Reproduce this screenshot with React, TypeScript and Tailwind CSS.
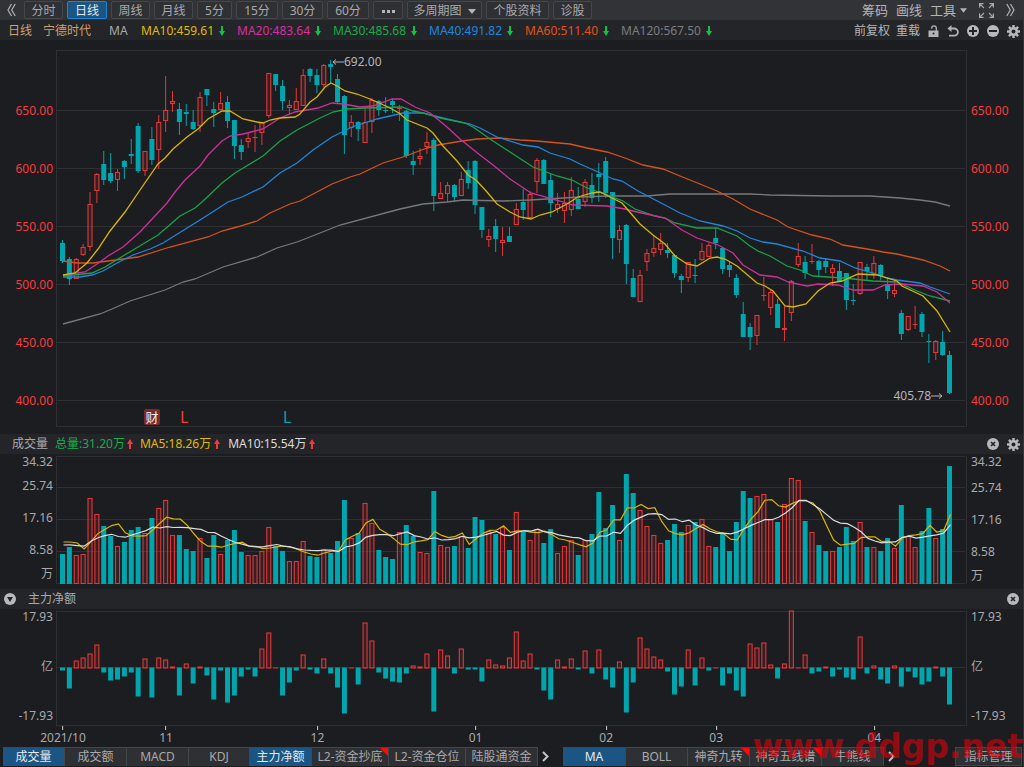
import { useState } from "react";
import type { ReactNode } from "react";
import clsx from "clsx";

// ── Data ──────────────────────────────────────────────────────────

// direction, high, body top, body bottom, low (chart units)
type Candle = ["u" | "d", number, number, number, number];

const CANDLES: Candle[] = [
  ["d", 240, 243, 261, 263], ["d", 257, 259, 279, 285], ["u", 258, 259, 279, 279], ["u", 244, 247, 255, 256],
  ["u", 192, 204, 247, 251], ["u", 173, 174, 191, 203], ["d", 151, 164, 180, 185], ["d", 153, 173, 181, 183],
  ["u", 169, 172, 180, 191], ["d", 160, 161, 167, 179], ["d", 139, 154, 156, 164], ["d", 123, 126, 171, 173],
  ["u", 151, 151, 171, 176], ["d", 127, 139, 160, 165], ["u", 115, 122, 150, 169], ["u", 76, 110, 121, 132],
  ["u", 91, 101, 104, 112], ["d", 103, 109, 122, 135], ["d", 104, 112, 114, 126], ["d", 110, 122, 129, 130],
  ["u", 92, 97, 126, 132], ["d", 89, 89, 95, 106], ["d", 102, 109, 113, 127], ["u", 92, 103, 110, 110],
  ["d", 96, 102, 121, 128], ["d", 120, 120, 146, 159], ["d", 139, 145, 152, 160], ["u", 133, 138, 142, 148],
  ["u", 125, 137, 138, 152], ["u", 122, 122, 133, 145], ["u", 73, 73, 116, 118], ["d", 74, 74, 85, 91],
  ["d", 80, 86, 101, 110], ["u", 100, 105, 108, 115], ["u", 88, 101, 110, 110], ["u", 69, 75, 106, 106],
  ["d", 68, 69, 76, 82], ["d", 69, 75, 85, 93], ["u", 64, 65, 85, 87], ["d", 60, 64, 67, 84],
  ["d", 74, 79, 102, 103], ["d", 95, 96, 135, 154], ["u", 115, 122, 128, 137], ["d", 121, 122, 129, 141],
  ["u", 106, 122, 143, 143], ["u", 98, 100, 122, 133], ["d", 100, 101, 110, 116], ["d", 97, 110, 111, 113],
  ["d", 99, 101, 105, 113], ["u", 105, 108, 109, 121], ["d", 110, 111, 156, 158], ["d", 151, 161, 165, 175],
  ["u", 148, 156, 159, 165], ["u", 132, 142, 147, 154], ["d", 138, 140, 196, 211], ["u", 182, 193, 199, 199],
  ["u", 182, 185, 194, 202], ["d", 184, 185, 197, 202], ["u", 172, 179, 196, 196], ["d", 161, 170, 183, 189],
  ["d", 160, 161, 205, 214], ["d", 207, 207, 230, 238], ["u", 229, 236, 240, 247], ["d", 219, 226, 239, 252],
  ["u", 227, 240, 243, 256], ["d", 227, 236, 242, 242], ["u", 203, 209, 225, 225], ["d", 189, 202, 210, 220],
  ["u", 191, 194, 218, 218], ["u", 158, 160, 182, 193], ["d", 159, 160, 184, 184], ["d", 174, 180, 203, 217],
  ["u", 193, 204, 209, 213], ["u", 192, 203, 211, 223], ["u", 177, 190, 210, 216], ["d", 187, 199, 209, 209],
  ["u", 179, 182, 202, 207], ["d", 173, 185, 198, 203], ["d", 163, 174, 177, 202], ["d", 157, 161, 193, 198],
  ["d", 192, 192, 238, 259], ["u", 225, 230, 240, 253], ["d", 224, 225, 264, 284], ["d", 269, 278, 297, 297],
  ["u", 270, 275, 302, 302], ["u", 249, 253, 262, 271], ["u", 236, 248, 253, 257], ["u", 233, 243, 250, 255],
  ["d", 243, 250, 253, 258], ["d", 254, 255, 273, 278], ["d", 274, 276, 280, 293], ["u", 262, 262, 278, 282],
  ["d", 259, 275, 276, 283], ["u", 243, 251, 260, 261], ["u", 242, 245, 257, 257], ["d", 228, 238, 243, 249],
  ["d", 248, 248, 269, 274], ["d", 262, 265, 270, 277], ["d", 274, 278, 295, 298], ["d", 302, 314, 337, 337],
  ["d", 323, 327, 337, 350], ["u", 315, 315, 336, 345], ["u", 277, 295, 296, 301], ["u", 289, 292, 308, 315],
  ["d", 299, 304, 328, 328], ["u", 306, 328, 330, 341], ["u", 280, 281, 313, 321], ["u", 243, 256, 265, 267],
  ["d", 256, 262, 273, 279], ["u", 244, 261, 262, 264], ["d", 260, 261, 270, 276], ["d", 258, 261, 267, 273],
  ["u", 264, 268, 273, 286], ["d", 263, 271, 282, 282], ["d", 273, 273, 300, 310], ["d", 284, 300, 301, 305],
  ["u", 262, 262, 294, 295], ["d", 264, 267, 271, 281], ["u", 256, 263, 274, 279], ["d", 264, 265, 276, 280],
  ["d", 277, 284, 291, 299], ["u", 279, 290, 294, 297], ["d", 310, 313, 334, 340], ["u", 316, 316, 330, 331],
  ["u", 306, 324, 325, 329], ["d", 312, 314, 332, 337], ["d", 334, 341, 342, 363], ["u", 340, 341, 353, 360],
  ["d", 331, 342, 355, 356], ["d", 351, 355, 393, 394],
];

const VOLUMES = [
  30, 37, 29, 30, 86, 70, 58, 48, 38, 42, 54, 57, 51, 66, 76, 84, 49, 49, 35, 33,
  46, 26, 49, 30, 44, 54, 32, 29, 29, 33, 57, 38, 33, 23, 23, 43, 28, 27, 35, 31,
  43, 84, 46, 51, 81, 61, 34, 27, 25, 52, 59, 48, 32, 31, 93, 39, 37, 38, 48, 36,
  67, 64, 53, 50, 57, 34, 72, 52, 44, 55, 41, 55, 31, 38, 44, 29, 44, 50, 92, 56,
  79, 44, 110, 91, 74, 58, 49, 41, 44, 60, 52, 59, 62, 65, 38, 37, 51, 33, 62, 93,
  86, 88, 90, 65, 62, 80, 106, 104, 63, 52, 39, 33, 33, 37, 57, 43, 62, 37, 37, 33,
  46, 36, 79, 48, 37, 53, 76, 46, 55, 118,
];

// trading days before the visible window, needed by the averages
const VOLUME_HISTORY = [36, 36, 36, 36, 36, 37, 34, 60, 49];

const FLOWS = [
  -3, -21, 8, 11, 15, 24, -5, -13, -12, -9, -5, -29, 10, -30, 11, 9, 2, -28, 5, -16,
  2, -8, -32, -3, -35, -28, -9, -2, -9, 20, 36, 1, -28, -15, -3, 14, -2, -6, 10, -6,
  -20, -46, 1, -17, 46, 28, -5, -11, -14, -15, -6, 3, 2, 15, -44, 19, 13, -6, 20, -2,
  -2, -14, 9, 4, 3, 11, 37, 8, 15, -2, -23, -32, 9, 2, 10, -2, 18, -6, 19, -12,
  -20, 7, -45, -15, 31, 20, 12, 9, -4, -27, -19, 19, -18, 11, -3, 1, -18, -6, -23, -29,
  25, 21, 26, 4, -11, 5, 58, 1, 14, -6, -4, 2, -9, -2, -10, -12, 32, -6, 3, -12,
  -16, 3, -19, -4, -10, -17, -14, 2, -9, -37,
];

const MA_LINES = [
  {
    name: "MA120",
    color: "#77787b",
    points:
      "63,324 100,314 112,309 130,301 165,290 183,282 195,279 223,267 257,257 277,248 297,242 320,233 340,225 400,209 423,204 447,202 463,200 503,201 530,200 580,197 607,196 647,196 670,194 750,194 770,195 830,196 870,196 900,198 920,200 935,202 950,206",
  },
  {
    name: "MA60",
    color: "#d5521d",
    points:
      "63,261 77,263 93,263 138,257 170,247 208,237 222,231 237,227 257,221 270,213 290,204 300,201 332,184 350,177 360,174 383,163 403,157 427,148 438,145 462,141 477,139 500,138 520,140 537,141 570,144 587,148 607,152 625,158 643,165 663,169 680,176 700,184 717,191 733,199 750,209 777,220 788,227 812,235 830,239 843,245 873,250 883,252 897,254 923,260 940,266 950,271",
  },
  {
    name: "MA40",
    color: "#1f86dc",
    points:
      "63,277 80,277 92,275 103,271 117,263 133,255 150,249 163,243 200,220 228,202 242,197 263,187 280,173 297,163 313,150 332,137 352,127 377,119 403,113 423,113 447,119 470,124 480,128 497,137 523,145 538,147 550,153 570,159 580,164 598,172 613,179 622,181 638,191 663,204 680,213 700,221 723,226 737,231 750,238 763,242 777,244 803,251 820,258 840,261 855,268 873,273 887,278 897,280 920,283 930,287 950,294",
  },
  {
    name: "MA30",
    color: "#17a34a",
    points:
      "63,276 92,273 105,267 118,259 133,250 158,235 180,216 195,208 202,202 222,183 235,173 263,156 280,141 297,130 320,118 333,112 347,109 367,108 402,107 413,111 423,113 440,118 465,123 473,127 493,141 510,152 533,167 557,176 572,180 587,188 605,194 623,201 635,209 655,216 665,218 675,223 697,228 717,228 737,236 750,246 758,251 770,256 787,266 800,270 813,276 843,278 873,281 897,282 917,291 930,296 950,301",
  },
  {
    name: "MA20",
    color: "#cf2f9a",
    points:
      "63,275 85,272 97,264 108,256 123,247 140,232 153,218 167,203 175,192 185,180 200,166 208,155 222,141 230,136 243,134 263,129 280,118 295,112 318,108 332,103 343,104 360,107 373,106 392,99 401,99 415,107 430,113 447,127 460,139 480,155 493,165 510,179 531,193 560,201 573,205 607,206 613,207 625,209 637,212 665,218 682,230 697,238 718,245 733,253 743,265 760,275 777,277 788,282 807,286 818,284 838,285 853,290 873,290 885,285 902,284 923,286 937,292 950,303",
  },
  {
    name: "MA10",
    color: "#d9b408",
    points:
      "63,275 75,273 87,263 98,249 110,231 125,212 140,190 158,164 165,158 173,149 187,137 198,129 208,119 222,111 230,111 243,119 257,122 263,123 270,120 280,118 295,117 300,114 310,102 317,97 325,87 331,83 337,86 345,91 357,94 370,99 377,102 388,107 399,113 407,120 427,128 433,133 443,146 457,161 468,175 476,180 487,192 497,204 510,212 520,217 531,219 540,215 552,212 567,204 578,197 592,193 600,192 612,198 622,203 628,210 640,224 653,235 665,244 675,256 687,264 697,266 710,258 717,257 725,259 737,266 757,283 765,286 773,291 785,306 793,307 806,304 818,291 830,283 842,281 858,274 877,275 897,281 902,286 923,296 937,311 950,332",
  },
];

const PERIODS = [
  { label: "分时", width: "w-[39px]" },
  { label: "日线", width: "w-[40px]" },
  { label: "周线", width: "w-[39px]" },
  { label: "月线", width: "w-[39px]" },
  { label: "5分", width: "w-[35px]" },
  { label: "15分", width: "w-[42px]" },
  { label: "30分", width: "w-[41px]" },
  { label: "60分", width: "w-[42px]" },
];

const AVERAGES = [
  { text: "MA10:459.61", color: "text-[#e0b90a]", width: "w-[84px]" },
  { text: "MA20:483.64", color: "text-[#d92fa0]", width: "w-[84px]" },
  { text: "MA30:485.68", color: "text-[#19ab4c]", width: "w-[84px]" },
  { text: "MA40:491.82", color: "text-[#1e88e0]", width: "w-[84px]" },
  { text: "MA60:511.40", color: "text-[#e2521c]", width: "w-[84px]" },
  { text: "MA120:567.50", color: "text-[#7b7c7f]", width: "w-[91px]" },
];

const PRICES = ["650.00", "600.00", "550.00", "500.00", "450.00", "400.00"];

const MONTHS = [
  { label: "2021/10", index: 0 },
  { label: "11", index: 15 },
  { label: "12", index: 37 },
  { label: "01", index: 60 },
  { label: "02", index: 79 },
  { label: "03", index: 95 },
  { label: "04", index: 118 },
];

const PANEL_TABS = [
  { label: "成交量", width: "w-[62px]" },
  { label: "成交额", width: "w-[62px]" },
  { label: "MACD", width: "w-[62px]" },
  { label: "KDJ", width: "w-[61px]" },
  { label: "主力净额", width: "w-[62px]" },
  { label: "L2-资金抄底", width: "w-[77px]", flag: true },
  { label: "L2-资金仓位", width: "w-[77px]" },
  { label: "陆股通资金", width: "w-[72px]" },
];

const MAIN_TABS = [
  { label: "MA", width: "w-[63px]" },
  { label: "BOLL", width: "w-[62px]" },
  { label: "神奇九转", width: "w-[62px]", flag: true },
  { label: "神奇五线谱", width: "w-[72px]", flag: true },
  { label: "牛熊线", width: "w-[62px]" },
];

// ── Chart helpers ─────────────────────────────────────────────────

const RED = "#e03838";
const TEAL = "#00a5ad";
const GRID = "#2f3034";
const LEFT = 56;
const WIDTH = 911;
const STEP = 887 / 129;

const xAt = (i: number) => 62.5 + i * STEP;

function movingAverage(days: number, base: number) {
  const all = [...VOLUME_HISTORY, ...VOLUMES];
  return VOLUMES.map((_, i) => {
    const end = i + VOLUME_HISTORY.length + 1;
    const sum = all.slice(end - days, end).reduce((a, b) => a + b, 0);
    return `${(xAt(i) + 1).toFixed(1)},${(base - sum / days).toFixed(1)}`;
  }).join(" ");
}

function Bar({ x, top, bottom, up }: { x: number; top: number; bottom: number; up: boolean }) {
  const height = Math.max(bottom - top, 1);
  if (!up || height < 2) {
    return <rect x={x - 2.5} y={top} width={5} height={height} fill={up ? RED : TEAL} />;
  }
  return (
    <rect
      x={x - 2}
      y={top + 0.5}
      width={4}
      height={height - 1}
      fill={RED}
      fillOpacity={0.12}
      stroke={RED}
      strokeWidth={1.1}
    />
  );
}

function Plot({ top, height, lines, children }: { top: number; height: number; lines: number[]; children: ReactNode }) {
  return (
    <svg
      className="block w-full"
      height={height}
      viewBox={`${LEFT} ${top} ${WIDTH} ${height}`}
      preserveAspectRatio="none"
      aria-hidden="true"
    >
      <g stroke={GRID}>
        {lines.map((y) => (
          <line key={y} x1={57} x2={965} y1={y + 0.5} y2={y + 0.5} />
        ))}
        <line x1={56.5} x2={56.5} y1={top} y2={top + height} />
        <line x1={966.5} x2={966.5} y1={top} y2={top + height} />
      </g>
      {children}
    </svg>
  );
}

// ── Icons ─────────────────────────────────────────────────────────

function DoubleChevron({ flip }: { flip?: boolean }) {
  return (
    <svg width="9" height="14" viewBox="0 0 9 14" fill="none" stroke="#b4b4b7" strokeWidth="1.2" className={clsx(flip && "rotate-180")}>
      <path d="M4.5 1 1 7l3.500 6M8.200 1 4.700 7l3.500 6" />
    </svg>
  );
}

function Caret({ small }: { small?: boolean }) {
  return (
    <svg width={small ? 7 : 8} height="5" viewBox="0 0 8 5" fill="#b4b4b7">
      <path d="M0 0h8L4 5z" />
    </svg>
  );
}

function Arrow({ up }: { up?: boolean }) {
  return (
    <svg width="6" height="10" viewBox="0 0 6 10" className={clsx("shrink-0", up && "rotate-180")} fill={up ? "#f5383a" : "#12c04c"}>
      <path d="M2 0h2v5h2L3 10 0 5h2z" />
    </svg>
  );
}

function ExpandIcon() {
  return (
    <svg width="15" height="15" viewBox="0 0 15 15" fill="none" stroke="#a9a9ac" strokeWidth="1.2">
      <path d="M.6 4.500V.6h3.900M.6.6 5 5M10.500.6h3.900v3.900M14.400.6 10 5M.6 10.500v3.900h3.900M.6 14.400 5 10M10.500 14.400h3.900v-3.900M14.400 14.400 10 10" />
    </svg>
  );
}

function LockIcon() {
  return (
    <svg width="11" height="12" viewBox="0 0 11 12">
      <path d="M8.300 6V3.200a2.300 2.300 0 0 0-4.600 0v.6" fill="none" stroke="#b4b4b7" strokeWidth="1.3" />
      <path d="M.5 5.500h10V12H.5z" fill="#b4b4b7" />
      <circle cx="5.5" cy="8.500" r="1" fill="#232428" />
    </svg>
  );
}

function UndoIcon() {
  return (
    <svg width="12" height="12" viewBox="0 0 12 12">
      <path d="M3 3.500h4.300a3.600 3.600 0 0 1 0 7.200H2" fill="none" stroke="#b4b4b7" strokeWidth="1.8" />
      <path d="M4.500 0v7L.5 3.500z" fill="#b4b4b7" />
    </svg>
  );
}

function CircleIcon({ kind }: { kind: "plus" | "minus" | "close" | "down" }) {
  return (
    <svg width="12" height="12" viewBox="0 0 12 12" fill="none" stroke="#232428" strokeWidth="2">
      <circle cx="6" cy="6" r="6" fill="#b9b9bc" stroke="none" />
      {kind === "plus" && <path d="M6 2v8M2 6h8" />}
      {kind === "minus" && <path d="M2 6h8" />}
      {kind === "close" && <path d="m4 4 4 4M8 4 4 8" strokeWidth="1.6" />}
      {kind === "down" && <path d="M3 4h6L6 9z" fill="#232428" stroke="none" />}
    </svg>
  );
}

function GearIcon() {
  return (
    <svg width="13" height="13" viewBox="0 0 13 13" fill="#b9b9bc">
      {[0, 45, 90, 135].map((angle) => (
        <rect key={angle} x="5.3" y="0" width="2.4" height="13" transform={`rotate(${angle} 6.5 6.5)`} />
      ))}
      <circle cx="6.5" cy="6.5" r="4.5" />
      <circle cx="6.5" cy="6.5" r="2" fill="#232428" />
    </svg>
  );
}

// ── Controls ──────────────────────────────────────────────────────

const toolButton = "flex h-[18px] items-center justify-center rounded-[2px] border pt-[2px] text-xs leading-none";
const toolIdle = "border-[#45464a] bg-[#2f3034] text-[#a9a9ac]";

function IconButton({ label, children }: { label: string; children: ReactNode }) {
  return (
    <button type="button" aria-label={label} className="flex items-center justify-center">
      {children}
    </button>
  );
}

type Tab = { label: string; width: string; flag?: boolean };

function TabList({ tabs, active, onSelect }: { tabs: Tab[]; active: string[]; onSelect: (label: string) => void }) {
  return (
    <div className="flex shrink-0">
      {tabs.map((tab) => (
        <button
          key={tab.label}
          type="button"
          onClick={() => onSelect(tab.label)}
          className={clsx(
            "relative h-[19px] border-t border-r border-[#45464a] text-center text-xs leading-[18px] whitespace-nowrap",
            tab.width,
            active.includes(tab.label) ? "bg-[#1a5584] text-[#e8e8ea]" : "bg-[#2f3034] text-[#a9a9ac]",
          )}
        >
          {tab.label}
          {tab.flag && (
            <svg width="8" height="8" viewBox="0 0 8 8" className="absolute top-0 right-0" fill="#ff0a0a">
              <path d="M0 0h8v8z" />
            </svg>
          )}
        </button>
      ))}
    </div>
  );
}

function PriceAxis({ side }: { side: "left" | "right" }) {
  return (
    <div className={clsx("pt-[42px] text-xs text-[#f53c3e]", side === "left" ? "pr-[3px] text-right" : "pl-[4px]")}>
      {PRICES.map((price) => (
        <div key={price} className="h-[58px] leading-[58px]">
          {price}
        </div>
      ))}
    </div>
  );
}

function VolumeAxis({ side }: { side: "left" | "right" }) {
  return (
    <div className={clsx("text-xs text-[#a9a9ac]", side === "left" ? "pr-[3px] text-right" : "pl-[4px]")}>
      <div className={clsx("leading-4", side === "left" ? "h-4" : "h-[18px]")}>34.32</div>
      <div className="h-8 leading-8">25.74</div>
      <div className="h-8 leading-8">17.16</div>
      <div className="h-8 leading-8">8.58</div>
      <div className="leading-4">万</div>
    </div>
  );
}

function FlowAxis({ side }: { side: "left" | "right" }) {
  return (
    <div
      className={clsx(
        "flex h-[115px] flex-col justify-between text-xs leading-4 text-[#a9a9ac]",
        side === "left" ? "pr-[3px] text-right" : "pl-[4px]",
      )}
    >
      <div>17.93</div>
      <div>亿</div>
      <div>-17.93</div>
    </div>
  );
}

// ── Page ──────────────────────────────────────────────────────────

export default function App() {
  const [period, setPeriod] = useState("日线");
  const [panels, setPanels] = useState(["成交量", "主力净额"]);
  const [mainTab, setMainTab] = useState("MA");

  const togglePanel = (label: string) =>
    setPanels((prev) => (prev.includes(label) ? prev.filter((p) => p !== label) : [...prev, label]));

  return (
    <main className="relative overflow-hidden border-r border-[#34353a] bg-[#1c1d21] font-['Noto_Sans','Noto_Sans_CJK_SC',sans-serif] text-[#a9a9ac]">
      {/* Period toolbar */}
      <div className="flex h-5 items-center gap-1 bg-[#323337] pr-2 pl-[7px]">
        <div className="flex w-[13px] items-center">
          <IconButton label="收起">
            <DoubleChevron />
          </IconButton>
        </div>
        {PERIODS.map((p) => (
          <button
            key={p.label}
            type="button"
            onClick={() => setPeriod(p.label)}
            className={clsx(
              toolButton,
              p.width,
              p.label === period ? "border-[#1c84d6] bg-[#1a5584] text-[#e8e8ea]" : toolIdle,
            )}
          >
            {p.label}
          </button>
        ))}
        <button type="button" aria-label="更多周期" className={clsx(toolButton, toolIdle, "w-[30px] gap-[2px]")}>
          <span className="size-[3px] bg-[#b4b4b7]" />
          <span className="size-[3px] bg-[#b4b4b7]" />
          <span className="size-[3px] bg-[#b4b4b7]" />
        </button>
        <button type="button" className={clsx(toolButton, toolIdle, "w-[75px] gap-1.5")}>
          多周期图
          <Caret />
        </button>
        <button type="button" className={clsx(toolButton, toolIdle, "w-[63px]")}>
          个股资料
        </button>
        <button type="button" className={clsx(toolButton, toolIdle, "w-[39px]")}>
          诊股
        </button>
        <div className="ml-auto flex items-center text-[13px] leading-none text-[#b4b4b7]">
          <button type="button" className="mr-2">筹码</button>
          <button type="button" className="mr-2">画线</button>
          <button type="button" className="mr-3 flex items-center gap-1">
            工具
            <Caret small />
          </button>
          <div className="mr-3 flex">
            <IconButton label="全屏">
              <ExpandIcon />
            </IconButton>
          </div>
          <IconButton label="展开">
            <DoubleChevron flip />
          </IconButton>
        </div>
      </div>

      {/* Moving averages */}
      <div className="flex h-5 items-center bg-[#242529] pt-[2px] pr-[3px] pl-2 text-xs leading-none">
        <span className="mr-[11px] text-[#d3a06c]">日线</span>
        <span className="mr-[18px] text-[#d3a06c]">宁德时代</span>
        <span className="w-8">MA</span>
        <div className="flex gap-3">
          {AVERAGES.map((avg) => (
            <span key={avg.text} className={clsx("flex items-center justify-between", avg.color, avg.width)}>
              {avg.text}
              <Arrow />
            </span>
          ))}
        </div>
        <div className="ml-auto flex items-center gap-2 text-[#b4b4b7]">
          <div className="flex gap-1.5">
            <button type="button">前复权</button>
            <button type="button">重载</button>
          </div>
          <IconButton label="解锁"><LockIcon /></IconButton>
          <IconButton label="撤销"><UndoIcon /></IconButton>
          <IconButton label="放大"><CircleIcon kind="plus" /></IconButton>
          <IconButton label="缩小"><CircleIcon kind="minus" /></IconButton>
          <IconButton label="设置"><GearIcon /></IconButton>
        </div>
      </div>

      {/* Candles */}
      <section className="grid h-[394px] grid-cols-[56px_minmax(0,1fr)_56px]">
        <PriceAxis side="left" />
        <div className="relative mt-[10px] h-[377px]">
          <Plot top={50} height={377} lines={[50, 110, 168, 226, 284, 342, 400, 426]}>
            {CANDLES.map(([dir, high, top, bottom, low], i) => {
              const up = dir === "u";
              const x = xAt(i);
              return (
                <g key={i}>
                  <path
                    d={up ? `M${x} ${high}V${top}M${x} ${bottom}V${low}` : `M${x} ${high}V${low}`}
                    stroke={up ? RED : TEAL}
                    strokeWidth={1}
                  />
                  <Bar x={x} top={top} bottom={bottom} up={up} />
                </g>
              );
            })}
            {MA_LINES.map((line) => (
              <polyline key={line.name} points={line.points} fill="none" stroke={line.color} strokeWidth={1.3} />
            ))}
          </Plot>
          <div className="absolute top-1 left-[276px] flex items-center text-xs leading-4 text-[#b4b4b7]">
            <svg width="12" height="6" viewBox="0 0 12 6" fill="none" stroke="#b4b4b7">
              <path d="M12 3H1M4 .5 1 3l3 2.500" />
            </svg>
            692.00
          </div>
          <div className="absolute right-6 bottom-[23px] flex items-center text-xs leading-4 text-[#b4b4b7]">
            405.78
            <svg width="12" height="6" viewBox="0 0 12 6" fill="none" stroke="#b4b4b7">
              <path d="M0 3h11M8 .5 11 3 8 5.500" />
            </svg>
          </div>
          <span className="absolute bottom-[2px] left-[88px] size-4 rounded-[2px] bg-[#7c2a2c] text-center text-[13px] leading-4 text-[#ededee]">
            财
          </span>
          <span className="absolute bottom-[2px] left-[124px] text-base leading-4 text-[#f5383a]">L</span>
          <span className="absolute bottom-[2px] left-[227px] text-base leading-4 text-[#00a5ad]">L</span>
        </div>
        <PriceAxis side="right" />
      </section>

      {/* Volume */}
      <div className="flex h-5 items-center bg-[#242529] pr-[3px] pl-3 text-xs leading-none">
        <span className="mr-[7px]">成交量</span>
        <span className="mr-[7px] flex items-center gap-[2px] text-[#19ab4c]">
          总量:31.20万
          <Arrow up />
        </span>
        <span className="mr-2 flex items-center gap-[3px] text-[#e0b90a]">
          MA5:18.26万
          <Arrow up />
        </span>
        <span className="flex items-center gap-[3px] text-[#dcdcde]">
          MA10:15.54万
          <Arrow up />
        </span>
        <div className="ml-auto flex items-center gap-2">
          <IconButton label="关闭成交量"><CircleIcon kind="close" /></IconButton>
          <IconButton label="成交量设置"><GearIcon /></IconButton>
        </div>
      </div>
      <section className="grid h-[135px] grid-cols-[56px_minmax(0,1fr)_56px]">
        <VolumeAxis side="left" />
        <div className="pt-[2px]">
          <Plot top={456} height={128} lines={[456, 487, 519, 551, 583]}>
            {VOLUMES.map((v, i) => (
              <Bar key={i} x={xAt(i)} top={584 - v} bottom={584} up={CANDLES[i][0] === "u"} />
            ))}
            <polyline points={movingAverage(5, 584)} fill="none" stroke="#d9b408" strokeWidth={1.2} />
            <polyline points={movingAverage(10, 584)} fill="none" stroke="#dcdcde" strokeWidth={1.2} />
          </Plot>
        </div>
        <VolumeAxis side="right" />
      </section>

      {/* Net flow */}
      <div className="flex h-5 items-center bg-[#242529] pr-[4px] pl-1 text-xs leading-none">
        <IconButton label="折叠主力净额"><CircleIcon kind="down" /></IconButton>
        <span className="ml-3">主力净额</span>
        <div className="ml-auto flex">
          <IconButton label="关闭主力净额"><CircleIcon kind="close" /></IconButton>
        </div>
      </div>
      <section className="grid h-[117px] grid-cols-[56px_minmax(0,1fr)_56px]">
        <FlowAxis side="left" />
        <div className="pt-[1px]">
          <Plot top={610} height={116} lines={[611, 667, 725]}>
            {FLOWS.map((v, i) => (
              <Bar key={i} x={xAt(i)} top={v > 0 ? 668.5 - v : 667.5} bottom={v > 0 ? 668.5 : 667.5 - v} up={v > 0} />
            ))}
          </Plot>
        </div>
        <FlowAxis side="right" />
      </section>

      {/* Months */}
      <div className="mx-14 h-[21px]">
        <div className="relative h-full">
          {MONTHS.map((m) => (
            <div
              key={m.label}
              className="absolute top-0 flex -translate-x-1/2 flex-col items-center text-xs leading-4"
              style={{ left: `${((xAt(m.index) + 0.5 - LEFT) / WIDTH) * 100}%` }}
            >
              <span className="h-1 w-px bg-[#d0d0d2]" />
              {m.label}
            </div>
          ))}
        </div>
      </div>

      {/* Indicator tabs */}
      <div className="flex h-5 items-start pr-px pl-[3px]">
        <TabList tabs={PANEL_TABS} active={panels} onSelect={togglePanel} />
        <button type="button" aria-label="更多副图指标" className="flex h-[19px] w-[25px] items-center pl-[3px]">
          <svg width="9" height="11" viewBox="0 0 9 11" fill="none" stroke="#c4c4c7" strokeWidth="2">
            <path d="m2 1 4.500 4.500L2 10" />
          </svg>
        </button>
        <TabList tabs={MAIN_TABS} active={[mainTab]} onSelect={setMainTab} />
        <button type="button" aria-label="更多主图指标" className="flex h-[19px] w-6 items-center pl-[3px]">
          <svg width="9" height="11" viewBox="0 0 9 11" fill="none" stroke="#c4c4c7" strokeWidth="2">
            <path d="m2 1 4.500 4.500L2 10" />
          </svg>
        </button>
        <button
          type="button"
          className="ml-auto h-[19px] w-[67px] border border-[#45464a] bg-[#2f3034] text-xs leading-[17px] text-[#a9a9ac]"
        >
          指标管理
        </button>
      </div>

      <div className="pointer-events-none absolute right-0 bottom-0 font-['DejaVu_Sans'] text-[33px] leading-10 font-bold text-[#e00008]/60">
        www.ddgp.net
      </div>
    </main>
  );
}
